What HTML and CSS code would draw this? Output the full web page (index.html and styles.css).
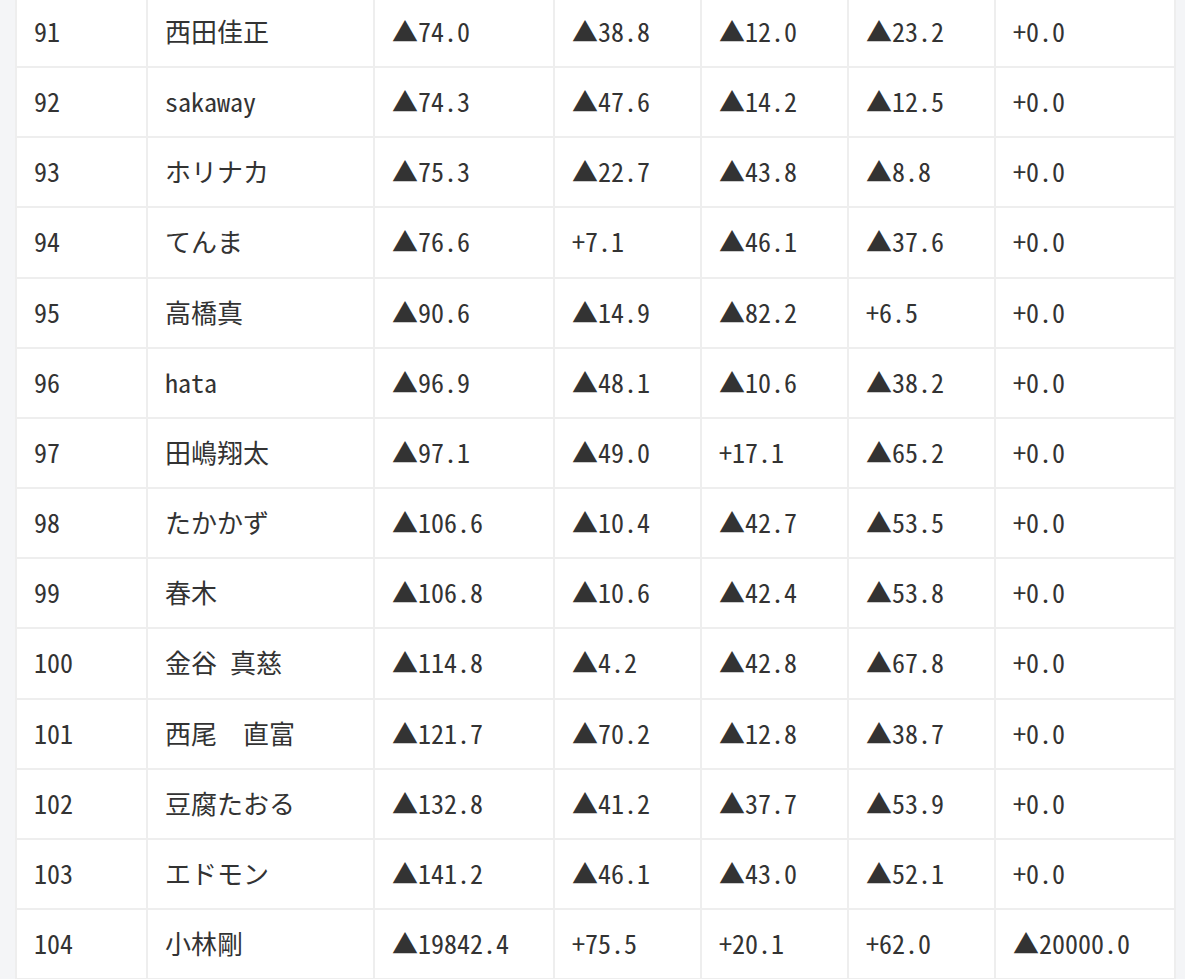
FILE: index.html
```html
<!DOCTYPE html>
<html lang="ja">
<head>
<meta charset="utf-8">
<link rel="stylesheet" href="styles.css">
</head>
<body>
<div class="page">
<table class="score">
<colgroup>
<col class="c1"><col class="c2"><col class="c3"><col class="c4"><col class="c5"><col class="c6"><col class="c7">
</colgroup>
<tbody>
<tr><td>91</td><td>西田佳正</td><td>▲74.0</td><td>▲38.8</td><td>▲12.0</td><td>▲23.2</td><td>+0.0</td></tr>
<tr><td>92</td><td>sakaway</td><td>▲74.3</td><td>▲47.6</td><td>▲14.2</td><td>▲12.5</td><td>+0.0</td></tr>
<tr><td>93</td><td>ホリナカ</td><td>▲75.3</td><td>▲22.7</td><td>▲43.8</td><td>▲8.8</td><td>+0.0</td></tr>
<tr><td>94</td><td>てんま</td><td>▲76.6</td><td>+7.1</td><td>▲46.1</td><td>▲37.6</td><td>+0.0</td></tr>
<tr><td>95</td><td>高橋真</td><td>▲90.6</td><td>▲14.9</td><td>▲82.2</td><td>+6.5</td><td>+0.0</td></tr>
<tr><td>96</td><td>hata</td><td>▲96.9</td><td>▲48.1</td><td>▲10.6</td><td>▲38.2</td><td>+0.0</td></tr>
<tr><td>97</td><td>田嶋翔太</td><td>▲97.1</td><td>▲49.0</td><td>+17.1</td><td>▲65.2</td><td>+0.0</td></tr>
<tr><td>98</td><td>たかかず</td><td>▲106.6</td><td>▲10.4</td><td>▲42.7</td><td>▲53.5</td><td>+0.0</td></tr>
<tr><td>99</td><td>春木</td><td>▲106.8</td><td>▲10.6</td><td>▲42.4</td><td>▲53.8</td><td>+0.0</td></tr>
<tr><td>100</td><td>金谷 真慈</td><td>▲114.8</td><td>▲4.2</td><td>▲42.8</td><td>▲67.8</td><td>+0.0</td></tr>
<tr><td>101</td><td>西尾　直富</td><td>▲121.7</td><td>▲70.2</td><td>▲12.8</td><td>▲38.7</td><td>+0.0</td></tr>
<tr><td>102</td><td>豆腐たおる</td><td>▲132.8</td><td>▲41.2</td><td>▲37.7</td><td>▲53.9</td><td>+0.0</td></tr>
<tr><td>103</td><td>エドモン</td><td>▲141.2</td><td>▲46.1</td><td>▲43.0</td><td>▲52.1</td><td>+0.0</td></tr>
<tr><td>104</td><td>小林剛</td><td>▲19842.4</td><td>+75.5</td><td>+20.1</td><td>+62.0</td><td>▲20000.0</td></tr>
</tbody>
</table>
</div>
</body>
</html>
```
FILE: styles.css
```css
html, body {
  margin: 0;
  padding: 0;
  background: #f4f5f7;
  overflow: hidden;
}
.page {
  padding: 0 11px 0 15px;
}
.score {
  margin-top: -4.17px;
  width: 1159px;
  table-layout: fixed;
  border-collapse: collapse;
  background: #ffffff;
  font-family: "Noto Sans Mono CJK JP", "Noto Sans CJK JP", "DejaVu Sans Mono", monospace;
  font-size: 26px;
  color: #333333;
}
.c1 { width: 131px; }
.c2 { width: 227px; }
.c3 { width: 180px; }
.c4 { width: 147px; }
.c5 { width: 147px; }
.c6 { width: 147px; }
.c7 { width: 180px; }
.score td {
  border: 2px solid #eeeeee;
  padding: 14px 16px 16px 17px;
  line-height: 38.17px;
  height: 38.17px;
  white-space: nowrap;
  vertical-align: middle;
  box-sizing: content-box;
}
```
